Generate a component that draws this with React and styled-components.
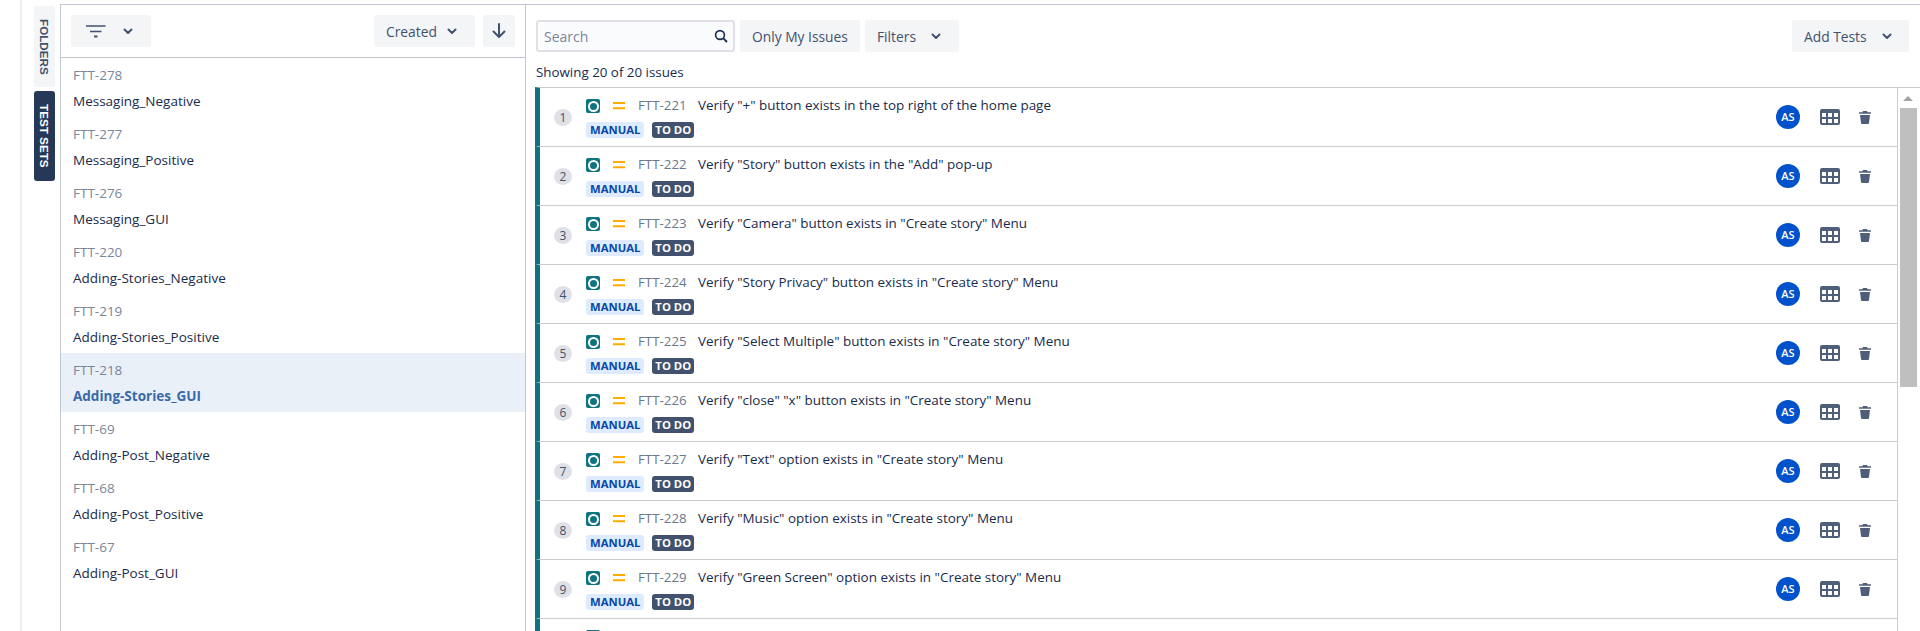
import React from "react";
import styled, { createGlobalStyle } from "styled-components";

const Global = createGlobalStyle`
  html, body { margin: 0; padding: 0; background: #fff; }
  body { font-family: "Open Sans", "Noto Sans", "Liberation Sans", sans-serif; color: #172b4d; }
  * { box-sizing: border-box; }
`;

const Page = styled.div`
  display: flex;
  width: 1920px;
  height: 631px;
  overflow: hidden;
  padding: 4px 0 0 21px;
  background: #fff;
`;
const ShadowEdge = styled.div`
  position: fixed;
  left: 20px;
  top: 0;
  bottom: 0;
  width: 2px;
  background: #eeeeee;
`;
const Rail = styled.div`
  width: 39px;
  flex: none;
  display: flex;
  flex-direction: column;
  align-items: flex-start;
  gap: 4px;
  padding: 2px 0 0 13px;
`;
const RailTab = styled.div`
  width: 21px;
  height: ${(p) => p.$h}px;
  border-radius: 3px;
  display: flex;
  align-items: center;
  justify-content: center;
  writing-mode: vertical-rl;
  font-family: "Liberation Sans", Arial, sans-serif;
  font-size: 11.7px;
  font-weight: 700;
  white-space: nowrap;
  background: ${(p) => (p.$active ? "#253858" : "#f4f5f7")};
  color: ${(p) => (p.$active ? "#fff" : "#42526e")};
`;
const LeftPanel = styled.div`
  width: 466px;
  flex: none;
  border-left: 1px solid #c1c7d0;
  border-right: 1px solid #c1c7d0;
  border-top: 1px solid #c1c7d0;
  display: flex;
  flex-direction: column;
`;
const LeftHeader = styled.div`
  height: 53px;
  flex: none;
  border-bottom: 1px solid #c1c7d0;
  display: flex;
  align-items: flex-start;
  padding: 10px 10px 0 10px;
  gap: 8px;
`;
const Btn = styled.div`
  height: 32px;
  background: #f4f5f7;
  border-radius: 3px;
  display: flex;
  align-items: center;
  font-size: 13.8px;
  color: #42526e;
  white-space: nowrap;
  flex: none;
  width: ${(p) => p.$w}px;
  padding: ${(p) => p.$pad || "0 12px"};
  justify-content: ${(p) => p.$justify || "flex-start"};
  gap: ${(p) => p.$gap || 0}px;
`;
const Spacer = styled.div`
  flex: 1;
`;
const SetItem = styled.div`
  height: 59px;
  flex: none;
  padding: 7px 12px 0 12px;
  background: ${(p) => (p.$selected ? "#e9f0f8" : "transparent")};
`;
const SetKey = styled.div`
  font-size: 13.5px;
  line-height: 20px;
  color: #7a869a;
`;
const SetName = styled.div`
  font-size: 13.5px;
  line-height: 20px;
  margin-top: 6px;
  font-weight: ${(p) => (p.$selected ? 700 : 400)};
  color: ${(p) => (p.$selected ? "#3869a8" : "#172b4d")};
`;
const RightPanel = styled.div`
  flex: 1;
  min-width: 0;
  border-top: 1px solid #c1c7d0;
  display: flex;
  flex-direction: column;
  padding-left: 9px;
`;
const Toolbar = styled.div`
  height: 47px;
  flex: none;
  display: flex;
  align-items: flex-start;
  gap: 5px;
  padding: 15px 11px 0 1px;
`;
const SearchBox = styled.div`
  width: 199px;
  height: 32px;
  flex: none;
  background: #fafbfc;
  border: 2px solid #dfe1e6;
  border-radius: 3px;
  display: flex;
  align-items: center;
  justify-content: space-between;
  padding: 0 5px 0 6px;
  font-size: 14px;
  color: #7a869a;
`;
const Count = styled.div`
  height: 35px;
  flex: none;
  padding: 10px 0 0 1px;
  font-size: 13.35px;
  line-height: 20px;
  color: #172b4d;
`;
const ListWrap = styled.div`
  flex: 1;
  min-height: 0;
  display: flex;
`;
const List = styled.div`
  flex: 1;
  min-width: 0;
  overflow: hidden;
`;
const Row = styled.div`
  height: 59px;
  flex: none;
  border-top: 1px solid #cccccc;
  border-left: 5px solid #0e7480;
  display: flex;
  align-items: stretch;
`;
const NumCell = styled.div`
  width: 46px;
  flex: none;
  display: flex;
  align-items: center;
  justify-content: center;
`;
const Num = styled.div`
  width: 18px;
  height: 17px;
  border-radius: 50%;
  background: #dfe1e6;
  font-size: 12px;
  line-height: 17px;
  text-align: center;
  color: #42526e;
`;
const Main = styled.div`
  flex: 1;
  min-width: 0;
  padding-top: 8px;
`;
const TitleLine = styled.div`
  display: flex;
  align-items: center;
  height: 18px;
  font-size: 13.45px;
  white-space: nowrap;
`;
const TypeIcon = styled.div`
  width: 14px;
  height: 14px;
  flex: none;
  margin-top: 2px;
  border-radius: 2px;
  background: #0e7480;
  display: flex;
  align-items: center;
  justify-content: center;
  &::after {
    content: "";
    width: 7px;
    height: 7px;
    border-radius: 50%;
    border: 2px solid #fff;
  }
`;
const Priority = styled.svg`
  width: 12px;
  height: 10px;
  flex: none;
  margin: 2px 0 0 13px;
`;
const IssueKey = styled.span`
  color: #6b778c;
  font-size: 13.3px;
  margin-left: 13px;
  width: 60px;
  flex: none;
`;
const Title = styled.span`
  color: #172b4d;
`;
const Tags = styled.div`
  display: flex;
  gap: 8px;
  margin-top: 8px;
`;
const Tag = styled.span`
  height: 16px;
  border-radius: 3px;
  padding: 0 ${(p) => (p.$dark ? 3 : 4)}px;
  font-size: 11.3px;
  line-height: 16px;
  font-weight: 700;
  background: ${(p) => (p.$dark ? "#42526e" : "#deebff")};
  color: ${(p) => (p.$dark ? "#fff" : "#0747a6")};
`;
const Actions = styled.div`
  width: 121px;
  flex: none;
  display: flex;
  align-items: center;
`;
const Avatar = styled.div`
  width: 24px;
  height: 24px;
  flex: none;
  border-radius: 50%;
  background: #0052cc;
  color: #fff;
  font-size: 11px;
  font-weight: 600;
  line-height: 24px;
  text-align: center;
`;
const GridIcon = styled.svg`
  width: 20px;
  height: 16px;
  flex: none;
  margin-left: 20px;
`;
const TrashIcon = styled.svg`
  width: 12px;
  height: 13px;
  flex: none;
  margin-left: 19px;
`;
const ScrollBar = styled.div`
  width: 23px;
  flex: none;
  border-left: 1px solid #cccccc;
  border-top: 1px solid #cccccc;
  background: #fff;
  display: flex;
  flex-direction: column;
  align-items: flex-start;
  padding: 8px 0 0 2px;
`;
const ArrowUp = styled.div`
  width: 0;
  height: 0;
  margin-left: 3px;
  border-left: 5px solid transparent;
  border-right: 5px solid transparent;
  border-bottom: 5px solid #a3a3a3;
`;
const Thumb = styled.div`
  width: 17px;
  height: 279px;
  margin-top: 7px;
  background: #bfbfbf;
`;
const ChevronIcon = styled.svg`
  width: 10px;
  height: 7px;
  flex: none;
`;

const Chevron = () => (
  <ChevronIcon viewBox="0 0 10 7">
    <path d="M1.5 1.5 L5 5 L8.5 1.5" fill="none" stroke="#42526e" strokeWidth="2" strokeLinecap="round" strokeLinejoin="round" />
  </ChevronIcon>
);

const sets = [
  ["FTT-278", "Messaging_Negative"],
  ["FTT-277", "Messaging_Positive"],
  ["FTT-276", "Messaging_GUI"],
  ["FTT-220", "Adding-Stories_Negative"],
  ["FTT-219", "Adding-Stories_Positive"],
  ["FTT-218", "Adding-Stories_GUI", true],
  ["FTT-69", "Adding-Post_Negative"],
  ["FTT-68", "Adding-Post_Positive"],
  ["FTT-67", "Adding-Post_GUI"],
];

const issues = [
  ["FTT-221", 'Verify "+" button exists in the top right of the home page'],
  ["FTT-222", 'Verify "Story" button exists in the "Add" pop-up'],
  ["FTT-223", 'Verify "Camera" button exists in "Create story" Menu'],
  ["FTT-224", 'Verify "Story Privacy" button exists in "Create story" Menu'],
  ["FTT-225", 'Verify "Select Multiple" button exists in "Create story" Menu'],
  ["FTT-226", 'Verify "close" "x" button exists in "Create story" Menu'],
  ["FTT-227", 'Verify "Text" option exists in "Create story" Menu'],
  ["FTT-228", 'Verify "Music" option exists in "Create story" Menu'],
  ["FTT-229", 'Verify "Green Screen" option exists in "Create story" Menu'],
];

export default function App() {
  return (
    <Page>
      <Global />
      <ShadowEdge />
      <Rail>
        <RailTab $h={81}>FOLDERS</RailTab>
        <RailTab $h={90} $active>TEST SETS</RailTab>
      </Rail>
      <LeftPanel>
        <LeftHeader>
          <Btn $w={80} $pad="0 0 0 15px" $gap={17}>
            <svg width="20" height="13" viewBox="0 0 20 13">
              <path d="M0 1h19.5M4 6.5h11.5" stroke="#42526e" strokeWidth="1.4" />
              <path d="M8 11.5h3.5" stroke="#42526e" strokeWidth="2" />
            </svg>
            <Chevron />
          </Btn>
          <Spacer />
          <Btn $w={101} $gap={10}>
            Created
            <Chevron />
          </Btn>
          <Btn $w={32} $pad="0" $justify="center">
            <svg width="14" height="16" viewBox="0 0 14 16">
              <path d="M7 1v13M1.5 8.5 7 14l5.5-5.5" fill="none" stroke="#42526e" strokeWidth="2" strokeLinecap="round" strokeLinejoin="round" />
            </svg>
          </Btn>
        </LeftHeader>
        {sets.map(([k, n, s]) => (
          <SetItem key={k} $selected={s}>
            <SetKey>{k}</SetKey>
            <SetName $selected={s}>{n}</SetName>
          </SetItem>
        ))}
      </LeftPanel>
      <RightPanel>
        <Toolbar>
          <SearchBox>
            Search
            <svg width="14" height="14" viewBox="0 0 14 14">
              <circle cx="6" cy="6" r="4.4" fill="none" stroke="#172b4d" strokeWidth="1.6" />
              <path d="M9.4 9.4 13 13" stroke="#172b4d" strokeWidth="1.8" />
            </svg>
          </SearchBox>
          <Btn $w={120}>Only My Issues</Btn>
          <Btn $w={94} $gap={15}>
            Filters
            <Chevron />
          </Btn>
          <Spacer />
          <Btn $w={117} $gap={15}>
            Add Tests
            <Chevron />
          </Btn>
        </Toolbar>
        <Count>Showing 20 of 20 issues</Count>
        <ListWrap>
          <List>
            {issues.map(([k, t], i) => (
              <Row key={k}>
                <NumCell>
                  <Num>{i + 1}</Num>
                </NumCell>
                <Main>
                  <TitleLine>
                    <TypeIcon />
                    <Priority viewBox="0 0 12 10">
                      <path d="M0 2h12M0 7.2h12" stroke="#ffab00" strokeWidth="2" />
                    </Priority>
                    <IssueKey>{k}</IssueKey>
                    <Title>{t}</Title>
                  </TitleLine>
                  <Tags>
                    <Tag>MANUAL</Tag>
                    <Tag $dark>TO DO</Tag>
                  </Tags>
                </Main>
                <Actions>
                  <Avatar>AS</Avatar>
                  <GridIcon viewBox="0 0 20 16">
                    <rect width="20" height="16" rx="2" fill="#505f79" />
                    <path d="M2 4h4v4H2zM8 4h4v4H8zM14 4h4v4h-4zM2 10h4v4H2zM8 10h4v4H8zM14 10h4v4h-4z" fill="#fff" />
                  </GridIcon>
                  <TrashIcon viewBox="0 0 12 13">
                    <path d="M4 0h4l.6 1.2H12v1.6H0V1.2h3.4zM1 4h10l-1 8a1 1 0 0 1-1 1H3a1 1 0 0 1-1-1z" fill="#505f79" />
                  </TrashIcon>
                </Actions>
              </Row>
            ))}
            <Row>
              <NumCell />
              <Main>
                <TitleLine>
                  <TypeIcon />
                </TitleLine>
              </Main>
            </Row>
          </List>
          <ScrollBar>
            <ArrowUp />
            <Thumb />
          </ScrollBar>
        </ListWrap>
      </RightPanel>
    </Page>
  );
}
